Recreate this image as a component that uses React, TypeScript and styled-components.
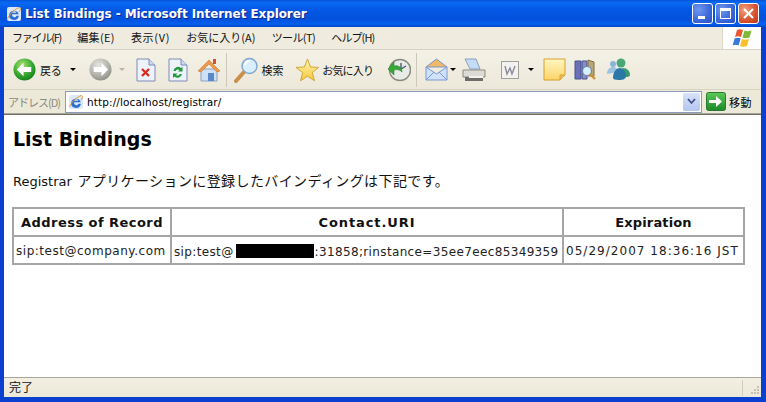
import React from "react";
import styled, { createGlobalStyle } from "styled-components";

const Global = createGlobalStyle`
  html, body { margin: 0; padding: 0; width: 766px; height: 402px; overflow: hidden; background: #0a3fd0; }
  #root { width: 766px; height: 402px; }
  * { box-sizing: border-box; }
`;

const jp = `"Noto Sans CJK JP", "DejaVu Sans", sans-serif`;
const ui = `"DejaVu Sans", "Noto Sans CJK JP", sans-serif`;

const Win = styled.div`
  width: 766px; height: 402px; display: flex; flex-direction: column;
  background: #0a3fd0; font-family: ${jp}; color: #000;
`;
const TitleBar = styled.div`
  height: 27px; flex: none; display: flex; align-items: center; padding: 0 7px 0 6px;
  background: linear-gradient(180deg, #0553d8 0%, #0a6af2 10%, #0458e6 35%, #0351dc 70%, #0460ee 90%, #0242c0 100%);
`;
const TitleText = styled.div`
  flex: 1; margin-left: 3px; font: bold 12px ${ui}; letter-spacing: -0.08px; color: #fff;
  text-shadow: 1px 1px 0 #0a2a90; white-space: nowrap;
`;
const WinBtns = styled.div`display: flex; gap: 2px;`;
const WinBtn = styled.div<{ $close?: boolean }>`
  width: 21px; height: 21px; border: 1px solid #fff; border-radius: 3px; display: flex; align-items: center; justify-content: center;
  background: ${p => p.$close
    ? "radial-gradient(circle at 30% 30%, #f0a080, #d8502c 60%, #c03a18)"
    : "radial-gradient(circle at 30% 30%, #6f98f0, #3a66d8 60%, #2a50c4)"};
`;
const Body = styled.div`
  flex: 1; min-height: 0; display: flex; flex-direction: column; margin: 0 5px 5px 4px; background: #ece9d8;
`;
const MenuBar = styled.div`
  height: 23px; flex: none; display: flex; align-items: center; background: #efebde; border-bottom: 1px solid #d8d4c4;
`;
const MenuItems = styled.div`flex: 1; display: flex; gap: 16.2px; padding: 0 0 3px 8px; font-size: 11px; color: #111;`;
const MenuItem = styled.span<{ $t: number }>`letter-spacing: ${p => p.$t}px; white-space: nowrap;`;
const Flag = styled.div`
  width: 39px; height: 22px; background: #fff; display: flex; align-items: center; justify-content: center; border-left: 1px solid #dcd8c8;
`;
const ToolBar = styled.div`
  height: 40px; flex: none; display: flex; align-items: center; padding-left: 9px;
  background: linear-gradient(180deg, #f4f1e6, #ece8da); border-bottom: 1px solid #d8d4c4;
`;
const Tool = styled.div<{ $l?: number }>`
  display: flex; align-items: center; margin-left: ${p => p.$l ?? 0}px; font-size: 11px; color: #111; white-space: nowrap; flex: none;
`;
const ToolLabel = styled.span<{ $l: number; $t: number }>`margin-left: ${p => p.$l}px; letter-spacing: ${p => p.$t}px;`;
const Caret = styled.div<{ $l: number; $off?: boolean }>`
  margin-left: ${p => p.$l}px; flex: none; width: 0; height: 0;
  border-left: 3px solid transparent; border-right: 3px solid transparent;
  border-top: 3px solid ${p => p.$off ? "#b8b4a8" : "#000"};
`;
const Sep = styled.div<{ $l: number }>`margin-left: ${p => p.$l}px; width: 1px; height: 34px; background: #cdc9b8; flex: none;`;
const AddressBar = styled.div`
  height: 24px; flex: none; display: flex; align-items: center; background: #ece9d8; padding-left: 4px;
  border-bottom: 1px solid #a8a698;
`;
const AddrLabel = styled.div`width: 57px; font-size: 11px; color: #8a8a80; letter-spacing: -1px; white-space: nowrap;`;
const AddrInput = styled.div`
  width: 637px; height: 22px; background: #fff; border: 1px solid #8a9ab8; display: flex; align-items: center; padding: 0 1px 0 2px;
`;
const Url = styled.div`flex: 1; margin-left: 3px; font: 10.5px ${ui}; letter-spacing: 0.12px; color: #000;`;
const DropBtn = styled.div`
  width: 17px; height: 18px; border-radius: 2px; background: linear-gradient(180deg, #d8e2f8, #b4c6f0); display: flex; align-items: center; justify-content: center;
`;
const GoBtn = styled.div`display: flex; align-items: center; margin-left: 4px; font-size: 11px; gap: 3px; letter-spacing: 0.5px;`;
const Page = styled.div`
  flex: 1; min-height: 0; background: #fff; padding: 12px 8px 0 8px; border-top: 1px solid #6e6e64; overflow: hidden;
`;
const Heading = styled.h1`
  margin: 0 0 0 1px; font: bold 19px/24px ${ui}; color: #000;
`;
const Para = styled.p`
  margin: 17px 0 15px 1px; font: 14px/24px ${jp}; letter-spacing: 0.4px; color: #111; white-space: nowrap;
`;
const Latin = styled.span`font: 13px ${ui}; letter-spacing: 0; margin-right: 2px;`;
const Table = styled.table`
  border-collapse: collapse; width: 731px; table-layout: fixed; border: 2px solid #a6a6a6;
`;
const Th = styled.th<{ $t: number }>`
  height: 28px; padding: 0; border: 2px solid #a6a6a6; text-align: center; font: bold 13px ${ui}; letter-spacing: ${p => p.$t}px; color: #111; white-space: nowrap;
`;
const Td = styled.td<{ $t: number }>`
  height: 28px; padding: 2px 0 0 2px; border: 2px solid #a6a6a6; font: 12px ${ui}; letter-spacing: ${p => p.$t}px; color: #222; white-space: nowrap; overflow: hidden;
`;
const Redacted = styled.span`display: inline-block; width: 78px; height: 14px; background: #000; vertical-align: -2px; margin: 0 1px 0 2px;`;
const StatusBar = styled.div`
  height: 20px; flex: none; display: flex; align-items: center; padding: 0 0 3px 5px; font-size: 12px; color: #111;
  background: linear-gradient(180deg, #f2efe2, #ece8da); border-top: 1px solid #a8a698; position: relative;
`;
const StatusDiv = styled.div`
  position: absolute; right: 18px; top: 2px; bottom: 1px; width: 1px; background: #d0ccbc;
`;
const Grip = styled.svg`position: absolute; right: 1px; bottom: 1px;`;

const IeIcon = ({ s = 16 }: { s?: number }) => (
  <svg width={s} height={s} viewBox="0 0 16 16" style={{ flex: "none" }}>
    <rect x="1" y="1" width="14" height="14" rx="2" fill="#dfe8f8" />
    <path d="M3 9.5a5 5 0 0 1 9.8-1.2H6.2a2.2 2.2 0 0 0 4.2 1.4h2.5A5 5 0 0 1 3 9.5Zm3.2-2.8h4a2.1 2.1 0 0 0-4 0Z" fill="#2a6fd8" />
    <path d="M1.5 13c2-5 7-10 12-11.5 1.5 1 .8 3-.6 4.6" fill="none" stroke="#e0a030" strokeWidth="1" />
  </svg>
);

const Circle = ({ dir, on }: { dir: "l" | "r"; on: boolean }) => {
  const id = on ? "gl" : "gr";
  return (
    <svg width="23" height="23" viewBox="0 0 24 24" style={{ flex: "none" }}>
      <defs>
        <radialGradient id={id} cx="40%" cy="30%" r="75%">
          <stop offset="0" stopColor={on ? "#a8e070" : "#e6e6e0"} />
          <stop offset="0.6" stopColor={on ? "#38a830" : "#b4b4ac"} />
          <stop offset="1" stopColor={on ? "#107c18" : "#8c8c84"} />
        </radialGradient>
      </defs>
      <circle cx="12" cy="12" r="11.5" fill={`url(#${id})`} />
      <path d={dir === "l" ? "M4 12l7-7v4.500h8v5h-8V19z" : "M20 12l-7-7v4.500H5v5h8V19z"} fill="#fff" />
    </svg>
  );
};
const Doc = ({ children }: { children: React.ReactNode }) => (
  <svg width="20" height="24" viewBox="0 0 20 24" style={{ flex: "none" }}>
    <path d="M1 1h12l6 6v16H1z" fill="#eef2fb" stroke="#7d8cb8" />
    <path d="M13 1v6h6" fill="#cdd8f0" stroke="#7d8cb8" />
    {children}
  </svg>
);
const Home = () => (
  <svg width="24" height="24" viewBox="0 0 24 24" style={{ flex: "none" }}>
    <path d="M4 11h16v12H4z" fill="#cfe0f6" stroke="#8aa0c8" />
    <path d="M1 13 12 2l11 11-3 1-8-8-8 8z" fill="#ec9a50" stroke="#c87830" strokeWidth=".6" />
    <rect x="16" y="1" width="3" height="5" fill="#d85030" />
    <path d="M11 15h6v8h-6z" fill="#5a88c8" />
  </svg>
);
const Search = () => (
  <svg width="25" height="26" viewBox="0 0 25 26" style={{ flex: "none" }}>
    <path d="M2 24 10 15" stroke="#c89048" strokeWidth="4" strokeLinecap="round" />
    <circle cx="15.5" cy="9" r="7.5" fill="#d8eefc" stroke="#80a8d0" strokeWidth="1.5" />
    <path d="M11 8a5 5 0 0 1 5-4" stroke="#fff" strokeWidth="2" fill="none" />
  </svg>
);
const Star = () => (
  <svg width="24" height="24" viewBox="0 0 24 24" style={{ flex: "none" }}>
    <defs>
      <linearGradient id="st" x1="0" y1="0" x2="0" y2="1">
        <stop offset="0" stopColor="#fff6b0" />
        <stop offset="1" stopColor="#f8c838" />
      </linearGradient>
    </defs>
    <path d="M12.500 1l3 8 8 .4-6.200 5.200 2.200 8.200-7-4.600-7 4.600 2.200-8.200L1 9.400 9.400 9z" fill="url(#st)" stroke="#d0a838" />
  </svg>
);
const History = () => (
  <svg width="24" height="24" viewBox="0 0 24 24" style={{ flex: "none" }}>
    <circle cx="13" cy="12" r="10.500" fill="#e8eae6" stroke="#8a8a80" strokeWidth="1.500" />
    <path d="M14 5v6l5-3" stroke="#4a5a70" strokeWidth="1.400" fill="none" />
    <path d="M1 11l6-7v4c5-1 8 2 8 6-2-2-4-3-8-2v5z" fill="#38a838" stroke="#1a7a20" strokeWidth=".5" />
  </svg>
);
const Mail = () => (
  <svg width="23" height="23" viewBox="0 0 23 23" style={{ flex: "none" }}>
    <path d="M1 9 11.500 1 22 9z" fill="#f0b868" stroke="#7a98d0" />
    <path d="M1 9v13h21V9L11.500 16z" fill="#cfe2fa" stroke="#7a98d0" />
    <path d="M1 22 9 14M22 22l-8-8" stroke="#7a98d0" fill="none" />
  </svg>
);
const Printer = () => (
  <svg width="24" height="24" viewBox="0 0 24 24" style={{ flex: "none" }}>
    <path d="M3 1l11 0 4 10H8z" fill="#c4dcf8" stroke="#8aa0b8" />
    <path d="M1 12h22v7H1z" fill="#dcdcd4" stroke="#8a8a80" />
    <path d="M3 19h18v4H3z" fill="#6e6e68" />
    <path d="M7 18h14v2H7z" fill="#f4f4ee" />
  </svg>
);
const Word = () => (
  <svg width="18" height="18" viewBox="0 0 18 18" style={{ flex: "none" }}>
    <rect x=".5" y=".5" width="17" height="17" fill="#f2f2f0" stroke="#a0a098" />
    <path d="M4 5l2 8 3-6 2 6 3-8" stroke="#8a8a9a" strokeWidth="1.400" fill="none" />
  </svg>
);
const Note = () => (
  <svg width="23" height="23" viewBox="0 0 23 23" style={{ flex: "none" }}>
    <defs>
      <linearGradient id="nt" x1="0" y1="0" x2="0" y2="1">
        <stop offset="0" stopColor="#fff6c0" />
        <stop offset="1" stopColor="#fcd468" />
      </linearGradient>
    </defs>
    <path d="M1 1h21v16l-5 5H1z" fill="url(#nt)" stroke="#d8a030" />
    <path d="M22 17h-5v5" fill="#e8c060" stroke="#d8a030" />
  </svg>
);
const Research = () => (
  <svg width="23" height="24" viewBox="0 0 23 24" style={{ flex: "none" }}>
    <path d="M1 3h6v18H1z" fill="#6c70b8" stroke="#48508a" />
    <path d="M8 3h5v18H8z" fill="#8a8cc8" stroke="#48508a" />
    <path d="M14 2l6 2v14h-6z" fill="#b8a878" stroke="#807040" />
    <circle cx="13" cy="13" r="4.500" fill="#d8eefc" stroke="#6888a8" strokeWidth="1.200" />
    <path d="M16 16l5 5" stroke="#d09030" strokeWidth="2.400" />
  </svg>
);
const Messenger = () => (
  <svg width="25" height="23" viewBox="0 0 25 23" style={{ flex: "none" }}>
    <circle cx="7" cy="6" r="3" fill="#88b4d8" />
    <path d="M1 16c0-5 3-7 6-7s5 2 5 5z" fill="#9cc4e0" />
    <circle cx="15" cy="5" r="4.500" fill="#4aa878" />
    <path d="M17 10c4 0 7 3 7 7 0 1.500-2 2-4 2l-4-9z" fill="#3c9a68" />
    <path d="M7 20c0-7 4-10 7-10s6 4 6 8c0 3-3 4-7 4s-6-1-6-2z" fill="#2a78a8" />
  </svg>
);
const GoIcon = () => (
  <svg width="20" height="19" viewBox="0 0 20 19" style={{ flex: "none" }}>
    <defs>
      <linearGradient id="go" x1="0" y1="0" x2="0" y2="1">
        <stop offset="0" stopColor="#5cc858" />
        <stop offset="1" stopColor="#1a8a28" />
      </linearGradient>
    </defs>
    <rect x=".5" y=".5" width="19" height="18" rx="2" fill="url(#go)" stroke="#2a7a30" />
    <path d="M3 8h7V4l6 5.500L10 15v-4H3z" fill="#fff" />
  </svg>
);
const WinFlag = () => (
  <svg width="21" height="20" viewBox="0 0 21 20">
    <path d="M5 2c2-1 4-1 6 0l-2 7c-2-1-4-1-6 0z" fill="#e85830" />
    <path d="M12.500 2.500c2 1 4 1 7 0l-2 7c-3 1-5 1-7 0z" fill="#80b838" />
    <path d="M2.600 10.500c2-1 4-1 6 0l-2 7c-2-1-4-1-6 0z" fill="#3a78d8" />
    <path d="M10 11c2 1 4 1 7 0l-2 7c-3 1-5 1-7 0z" fill="#f8c028" />
  </svg>
);

export default function App() {
  return (
    <Win>
      <Global />
      <TitleBar>
        <IeIcon />
        <TitleText>List Bindings - Microsoft Internet Explorer</TitleText>
        <WinBtns>
          <WinBtn>
            <svg width="13" height="13" viewBox="0 0 13 13"><rect x="2" y="9" width="7" height="3" fill="#fff" /></svg>
          </WinBtn>
          <WinBtn>
            <svg width="13" height="13" viewBox="0 0 13 13"><path d="M1.500 1.500h10v10h-10z" fill="none" stroke="#fff" /><rect x="1" y="1" width="11" height="3" fill="#fff" /></svg>
          </WinBtn>
          <WinBtn $close>
            <svg width="13" height="13" viewBox="0 0 13 13"><path d="M2 2l9 9M11 2l-9 9" stroke="#fff" strokeWidth="2" /></svg>
          </WinBtn>
        </WinBtns>
      </TitleBar>
      <Body>
        <MenuBar>
          <MenuItems>
            <MenuItem $t={-1.2}>ファイル(F)</MenuItem>
            <MenuItem $t={0.3}>編集(E)</MenuItem>
            <MenuItem $t={0.7}>表示(V)</MenuItem>
            <MenuItem $t={0}>お気に入り(A)</MenuItem>
            <MenuItem $t={-0.6}>ツール(T)</MenuItem>
            <MenuItem $t={-0.9}>ヘルプ(H)</MenuItem>
          </MenuItems>
          <Flag><WinFlag /></Flag>
        </MenuBar>
        <ToolBar>
          <Tool><Circle dir="l" on /><ToolLabel $l={4} $t={-0.2}>戻る</ToolLabel></Tool>
          <Caret $l={8} />
          <Tool $l={13}><Circle dir="r" on={false} /></Tool>
          <Caret $l={7} $off />
          <Tool $l={11}><Doc><path d="M6 11l7 7M13 11l-7 7" stroke="#d83020" strokeWidth="2.400" /></Doc></Tool>
          <Tool $l={12}><Doc><path d="M5.500 13a4.500 4.500 0 0 1 7.500-3l1.500-1v4.500H10l1.500-1.500a2.500 2.500 0 0 0-3.800 1zM14 16a4.500 4.500 0 0 1-7.500 2.500L5 20v-4.500h4.500L8 17a2.500 2.500 0 0 0 3.800-1z" fill="#1f9a38" /></Doc></Tool>
          <Tool $l={9}><Home /></Tool>
          <Sep $l={5} />
          <Tool $l={7}><Search /><ToolLabel $l={3} $t={-0.2}>検索</ToolLabel></Tool>
          <Tool $l={12}><Star /><ToolLabel $l={3} $t={-0.8}>お気に入り</ToolLabel></Tool>
          <Tool $l={14}><History /></Tool>
          <Sep $l={5} />
          <Tool $l={8}><Mail /></Tool>
          <Caret $l={2} />
          <Tool $l={6}><Printer /></Tool>
          <Tool $l={15}><Word /></Tool>
          <Caret $l={9} />
          <Tool $l={9}><Note /></Tool>
          <Tool $l={8}><Research /></Tool>
          <Tool $l={9}><Messenger /></Tool>
        </ToolBar>
        <AddressBar>
          <AddrLabel>アドレス(D)</AddrLabel>
          <AddrInput>
            <IeIcon />
            <Url>http://localhost/registrar/</Url>
            <DropBtn>
              <svg width="9" height="7" viewBox="0 0 9 7"><path d="M1 1l3.500 4L8 1" fill="none" stroke="#40508a" strokeWidth="1.800" /></svg>
            </DropBtn>
          </AddrInput>
          <GoBtn><GoIcon /><span>移動</span></GoBtn>
        </AddressBar>
        <Page>
          <Heading>List Bindings</Heading>
          <Para><Latin>Registrar</Latin> アプリケーションに登録したバインディングは下記です。</Para>
          <Table>
            <colgroup>
              <col style={{ width: 158 }} />
              <col style={{ width: 392 }} />
              <col style={{ width: 181 }} />
            </colgroup>
            <thead>
              <tr><Th $t={0.45}>Address of Record</Th><Th $t={0.9}>Contact.URI</Th><Th $t={0.15}>Expiration</Th></tr>
            </thead>
            <tbody>
              <tr>
                <Td $t={0.52}>sip:test@company.com</Td>
                <Td $t={0.36}>sip:test@<Redacted />:31858;rinstance=35ee7eec85349359</Td>
                <Td $t={1.03}>05/29/2007 18:36:16 JST</Td>
              </tr>
            </tbody>
          </Table>
        </Page>
        <StatusBar>
          完了
          <StatusDiv />
          <Grip width="12" height="12" viewBox="0 0 12 12">
            <path d="M9 2h2v2H9zM6 5h2v2H6zM9 5h2v2H9zM3 8h2v2H3zM6 8h2v2H6zM9 8h2v2H9z" fill="#c4c0b0" />
          </Grip>
        </StatusBar>
      </Body>
    </Win>
  );
}
